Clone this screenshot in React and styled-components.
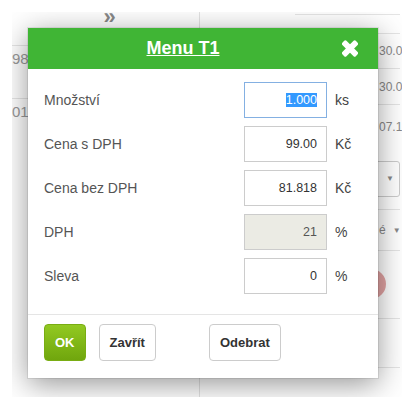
import React from 'react';
import styled, { createGlobalStyle } from 'styled-components';

const GlobalStyle = createGlobalStyle`
  body {
    margin: 0;
    background: #fff;
    font-family: "Liberation Sans", Arial, sans-serif;
  }
`;

const Screen = styled.div`
  width: 418px;
  height: 409px;
  padding: 12px;
  box-sizing: border-box;
`;

const Frame = styled.div`
  position: relative;
  width: 390px;
  height: 385px;
  overflow: hidden;
  background: #fff;
`;

// page behind the dialog
const Backdrop = styled.div`
  display: flex;
  height: 100%;
  color: #999;
`;

const LeftCol = styled.div`
  width: 187px;
  border-right: 1px solid #e3e3e3;
  display: flex;
  flex-direction: column;
`;

const MidCol = styled.div`
  width: 95px;
`;

const RightCol = styled.div`
  width: 105px;
  padding-top: 2px;
  display: flex;
  flex-direction: column;
`;

const ColHead = styled.div`
  height: 33px;
  text-align: center;
  font-size: 22px;
  font-weight: bold;
  line-height: 10px;
  color: #888;
  padding-left: 8px;
  box-sizing: border-box;
`;

const LeftCell = styled.div`
  height: ${p => p.$h}px;
  border-top: 1px solid #e5e5e5;
  box-sizing: border-box;
  padding-top: 4px;
  font-size: 15px;
  white-space: nowrap;
  overflow: hidden;
`;

const RightCell = styled.div`
  height: ${p => p.$h}px;
  border-top: ${p => (p.$noLine ? 'none' : '1px solid #e5e5e5')};
  box-sizing: border-box;
  display: flex;
  align-items: center;
  padding-left: 84px;
  font-size: 12px;
  color: #888;
  white-space: nowrap;
`;

const SelectBox = styled.div`
  margin-left: -25px;
  width: 47px;
  height: 36px;
  box-sizing: border-box;
  border: 1px solid #ccc;
  border-radius: 3px;
  display: flex;
  align-items: center;
  justify-content: flex-end;
  padding-right: 5px;
  font-size: 8px;
  color: #888;
`;

const Caret = styled.span`
  font-size: 8px;
  margin-left: 7px;
`;

const Dot = styled.div`
  margin-left: -23px;
  width: 30px;
  height: 30px;
  border-radius: 50%;
  background: #e3a4a4;
`;

const Dialog = styled.div`
  position: absolute;
  left: 16px;
  top: 16px;
  width: 350px;
  background: #fff;
  box-shadow: 0 0 0 1px rgba(0, 0, 0, 0.08), 0 6px 28px rgba(0, 0, 0, 0.42);
`;

const Header = styled.div`
  height: 41px;
  background: #40b535;
  display: flex;
  align-items: center;
  padding-right: 16px;
`;

const Title = styled.div`
  flex: 1;
  text-align: center;
  color: #fff;
  font-size: 18px;
  font-weight: bold;
  text-decoration: underline;
`;

const Close = styled.button`
  width: 24px;
  height: 41px;
  padding: 0;
  border: 0;
  background: none;
  display: flex;
  align-items: center;
  justify-content: center;
`;

const Body = styled.div`
  padding: 13px 16px 20px;
  display: flex;
  flex-direction: column;
  gap: 8px;
`;

const Row = styled.div`
  display: flex;
  align-items: center;
  height: 36px;
`;

const Label = styled.div`
  flex: 1;
  font-size: 14px;
  color: #555;
`;

const Field = styled.div`
  width: 83px;
  height: 36px;
  box-sizing: border-box;
  border: 1px solid ${p => (p.$focused ? '#84b0e2' : '#ccc')};
  background: ${p => (p.$disabled ? '#ebebe4' : '#fff')};
  padding: 0 9px;
  text-align: right;
  line-height: 34px;
  font-size: 12.5px;
  color: ${p => (p.$disabled ? '#555' : '#333')};
`;

const Selected = styled.span`
  background: #3399ff;
  color: #fff;
`;

const Unit = styled.div`
  width: 35px;
  padding-left: 8px;
  box-sizing: border-box;
  font-size: 14px;
  color: #444;
`;

const Footer = styled.div`
  border-top: 1px solid #e5e5e5;
  padding: 9px 16px 17px;
  display: flex;
  align-items: center;
  gap: 13px;
`;

const Button = styled.button`
  height: 37px;
  padding: 0 10px;
  border-radius: 4px;
  font-family: inherit;
  font-size: 13px;
  font-weight: bold;
  border: 1px solid ${p => (p.$primary ? '#79ad13' : '#ccc')};
  background: ${p => (p.$primary ? 'linear-gradient(#92c922, #70a60d)' : '#fff')};
  color: ${p => (p.$primary ? '#fff' : '#333')};
  margin-left: ${p => p.$push || 0}px;
`;

function CloseIcon() {
  return (
    <svg width="16" height="17" viewBox="0 0 16 16">
      <g fill="#fff" transform="rotate(45 8 8)">
        <rect x="-1.5" y="5.1" width="19" height="5.8" rx="1.6" />
        <rect x="5.1" y="-1.5" width="5.8" height="19" rx="1.6" />
      </g>
    </svg>
  );
}

const rows = [
  { label: 'Množství', value: '1.000', unit: 'ks', focused: true },
  { label: 'Cena s DPH', value: '99.00', unit: 'Kč' },
  { label: 'Cena bez DPH', value: '81.818', unit: 'Kč' },
  { label: 'DPH', value: '21', unit: '%', disabled: true },
  { label: 'Sleva', value: '0', unit: '%' },
];

export default function App() {
  return (
    <Screen>
      <GlobalStyle />
      <Frame>
        <Backdrop>
          <LeftCol>
            <ColHead>»</ColHead>
            <LeftCell $h={53}>98</LeftCell>
            <LeftCell $h={60}>01</LeftCell>
          </LeftCol>
          <MidCol />
          <RightCol>
            <RightCell $h={19} />
            <RightCell $h={36}>30.0</RightCell>
            <RightCell $h={36}>30.0</RightCell>
            <RightCell $h={45}>07.1</RightCell>
            <RightCell $h={62} $noLine>
              <SelectBox>▼</SelectBox>
            </RightCell>
            <RightCell $h={41}>
              é<Caret>▼</Caret>
            </RightCell>
            <RightCell $h={69}>
              <Dot />
            </RightCell>
            <RightCell $h={50} />
            <RightCell $h={30} />
          </RightCol>
        </Backdrop>

        <Dialog>
          <Header>
            <Title>Menu T1</Title>
            <Close aria-label="Zavřít">
              <CloseIcon />
            </Close>
          </Header>
          <Body>
            {rows.map(r => (
              <Row key={r.label}>
                <Label>{r.label}</Label>
                <Field $focused={r.focused} $disabled={r.disabled}>
                  {r.focused ? <Selected>{r.value}</Selected> : r.value}
                </Field>
                <Unit>{r.unit}</Unit>
              </Row>
            ))}
          </Body>
          <Footer>
            <Button $primary>OK</Button>
            <Button>Zavřít</Button>
            <Button $push={40}>Odebrat</Button>
          </Footer>
        </Dialog>
      </Frame>
    </Screen>
  );
}
